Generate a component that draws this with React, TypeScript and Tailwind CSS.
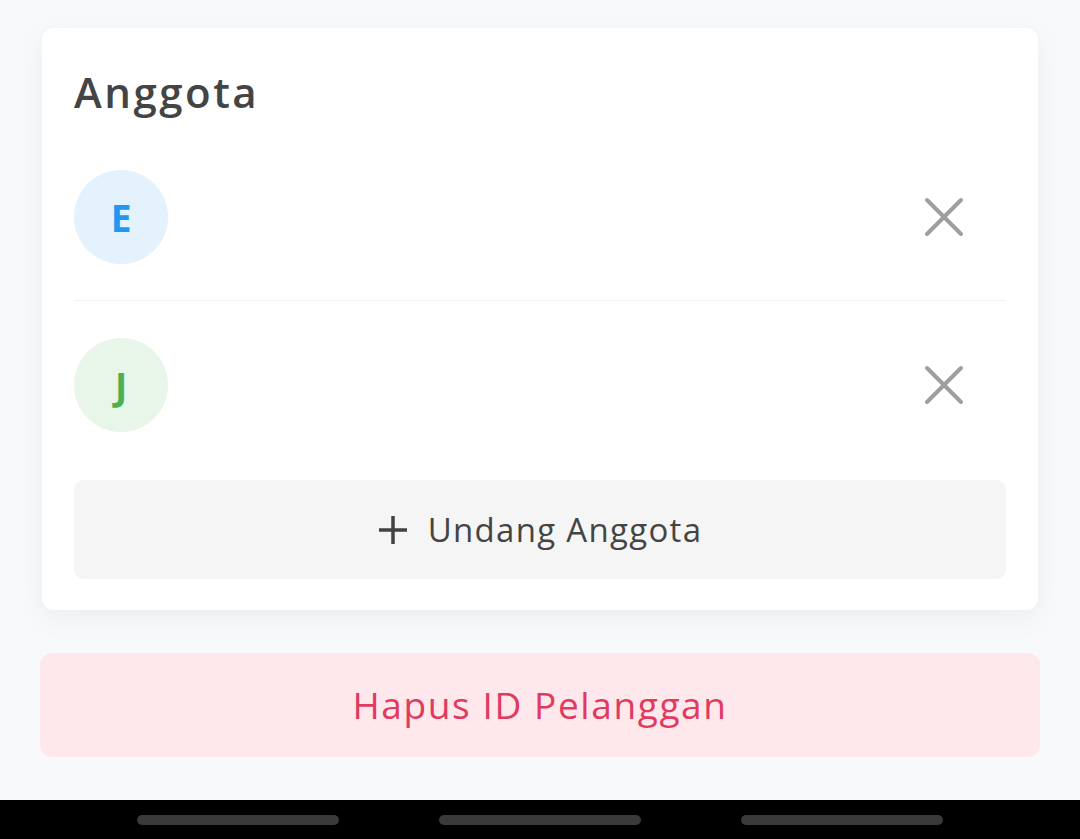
import React from "react";

const font = { fontFamily: '"Open Sans", Lato, "Noto Sans", sans-serif' };

function XIcon() {
  return (
    <svg width="40" height="40" viewBox="0 0 40 40" fill="none">
      <path d="M3 3 L37 37 M37 3 L3 37" stroke="#9e9e9e" strokeWidth="4" strokeLinecap="round" />
    </svg>
  );
}

function PlusIcon() {
  return (
    <svg width="30" height="30" viewBox="0 0 30 30" fill="none">
      <path d="M15 1 V29 M1 15 H29" stroke="#424242" strokeWidth="3.5" />
    </svg>
  );
}

function Member({ letter, bg, color, className }: { letter: string; bg: string; color: string; className: string }) {
  return (
    <div className={`flex items-center justify-between ${className}`}>
      <div className={`w-[94px] h-[94px] rounded-full flex items-center justify-center ${bg}`}>
        <span className={`text-[37px] font-bold leading-none ${color}`}>{letter}</span>
      </div>
      <div className="mr-[42px] flex items-center justify-center">
        <XIcon />
      </div>
    </div>
  );
}

export default function App() {
  return (
    <div className="w-[1080px] h-[839px] bg-[#f8f9fb] flex flex-col overflow-hidden" style={font}>
      <div className="flex-1 px-[42px] pt-[28px]">
        <div className="bg-white rounded-[12px] shadow-[0_8px_30px_rgba(0,0,0,0.05)] px-[32px] pt-[36px] pb-[31px]">
          <h2 className="text-[42px] leading-[56px] font-semibold text-[#444444] tracking-[2.5px]">Anggota</h2>
          <div className="mt-[14px]">
            <Member letter="E" bg="bg-[#e3f2fd]" color="text-[#2196f3]" className="py-[36px] border-b border-[#f2f2f2]" />
            <Member letter="J" bg="bg-[#e8f5e9]" color="text-[#4caf50]" className="pt-[37px] pb-[48px]" />
          </div>
          <button className="w-full h-[99px] rounded-[10px] bg-[#f5f5f5] flex items-center justify-center gap-[20px]">
            <PlusIcon />
            <span className="text-[33px] text-[#444444] tracking-[1.3px]">Undang Anggota</span>
          </button>
        </div>
        <div className="-mx-[2px] mt-[43px] h-[104px] rounded-[12px] bg-[#ffe8ec] flex items-center justify-center">
          <span className="text-[37px] font-medium text-[#e03a61] tracking-[1.6px]">Hapus ID Pelanggan</span>
        </div>
      </div>
      <div className="h-[39px] bg-black flex items-center justify-center gap-[100px]">
        <div className="w-[202px] h-[10px] rounded-full bg-[#3a3a3a]" />
        <div className="w-[202px] h-[10px] rounded-full bg-[#3a3a3a]" />
        <div className="w-[202px] h-[10px] rounded-full bg-[#3a3a3a]" />
      </div>
    </div>
  );
}
